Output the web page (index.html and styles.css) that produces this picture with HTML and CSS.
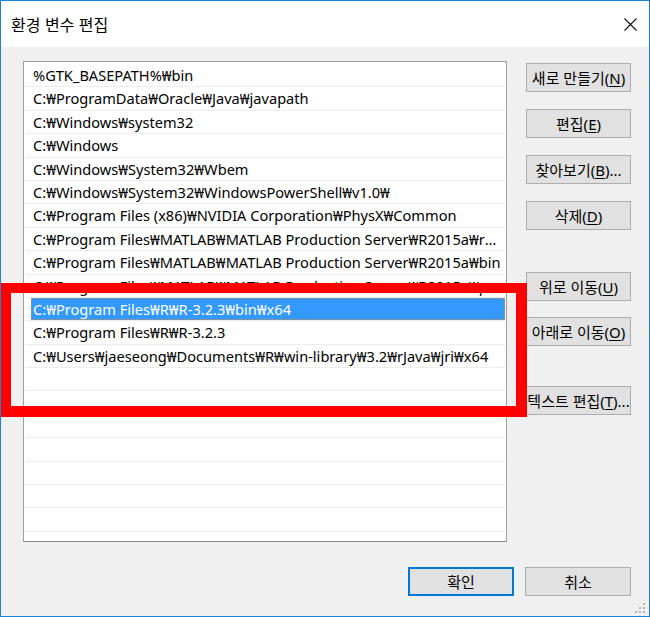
FILE: index.html
```html
<!DOCTYPE html>
<html lang="ko">
<head>
<meta charset="utf-8">
<title>환경 변수 편집</title>
<link rel="stylesheet" href="styles.css">
</head>
<body>
<div class="window">
  <div class="titlebar">
    <span class="title">환경 변수 편집</span>
    <svg class="close" width="13" height="13" viewBox="0 0 13 13" aria-hidden="true">
      <path d="M0.5 0.5 L12.5 12.5 M12.5 0.5 L0.5 12.5" stroke="#111" stroke-width="1.1" fill="none"/>
    </svg>
  </div>
  <div class="content">
    <div class="main">
      <div class="list">
        <div class="row"><span class="cell">%GTK_BASEPATH%₩bin</span></div>
        <div class="row"><span class="cell">C:₩ProgramData₩Oracle₩Java₩javapath</span></div>
        <div class="row"><span class="cell">C:₩Windows₩system32</span></div>
        <div class="row"><span class="cell">C:₩Windows</span></div>
        <div class="row"><span class="cell">C:₩Windows₩System32₩Wbem</span></div>
        <div class="row"><span class="cell">C:₩Windows₩System32₩WindowsPowerShell₩v1.0₩</span></div>
        <div class="row"><span class="cell">C:₩Program Files (x86)₩NVIDIA Corporation₩PhysX₩Common</span></div>
        <div class="row"><span class="cell">C:₩Program Files₩MATLAB₩MATLAB Production Server₩R2015a₩runtime₩win64</span></div>
        <div class="row"><span class="cell">C:₩Program Files₩MATLAB₩MATLAB Production Server₩R2015a₩bin</span></div>
        <div class="row"><span class="cell">C:₩Program Files₩MATLAB₩MATLAB Production Server₩R2015a₩polyspace₩bin</span></div>
        <div class="row selected"><span class="cell">C:₩Program Files₩R₩R-3.2.3₩bin₩x64</span></div>
        <div class="row"><span class="cell">C:₩Program Files₩R₩R-3.2.3</span></div>
        <div class="row"><span class="cell">C:₩Users₩jaeseong₩Documents₩R₩win-library₩3.2₩rJava₩jri₩x64</span></div>
        <div class="row"><span class="cell"></span></div>
        <div class="row"><span class="cell"></span></div>
        <div class="row"><span class="cell"></span></div>
        <div class="row"><span class="cell"></span></div>
        <div class="row"><span class="cell"></span></div>
        <div class="row"><span class="cell"></span></div>
        <div class="row"><span class="cell"></span></div>
        <div class="row"><span class="cell"></span></div>
      </div>
      <div class="actions">
        <button class="btn">새로 만들기(<u>N</u>)</button>
        <button class="btn">편집(<u>E</u>)</button>
        <button class="btn">찾아보기(<u>B</u>)...</button>
        <button class="btn">삭제(<u>D</u>)</button>
        <button class="btn gap-up">위로 이동(<u>U</u>)</button>
        <button class="btn gap-down">아래로 이동(<u>O</u>)</button>
        <button class="btn gap-text">텍스트 편집(<u>T</u>)...</button>
      </div>
    </div>
    <div class="footer">
      <button class="btn btn-wide btn-default">확인</button>
      <button class="btn btn-wide">취소</button>
    </div>
  </div>
  <svg class="grip" width="12" height="12" viewBox="0 0 12 12" aria-hidden="true">
    <rect x="9" y="1" width="2" height="2" fill="#b4b4b4"/>
    <rect x="5" y="5" width="2" height="2" fill="#b4b4b4"/>
    <rect x="9" y="5" width="2" height="2" fill="#b4b4b4"/>
    <rect x="1" y="9" width="2" height="2" fill="#b4b4b4"/>
    <rect x="5" y="9" width="2" height="2" fill="#b4b4b4"/>
    <rect x="9" y="9" width="2" height="2" fill="#b4b4b4"/>
  </svg>
  <div class="mark"></div>
</div>
</body>
</html>
```

FILE: styles.css
```css
* {
  box-sizing: border-box;
}

html,
body {
  margin: 0;
  padding: 0;
}

body {
  font-family: "Noto Sans", "Noto Sans CJK KR", sans-serif;
  font-size: 15px;
  color: #000;
  background: #f0f0f0;
}

.window {
  position: relative;
  width: 650px;
  height: 617px;
  border: 1px solid #1883d7;
  background: #f0f0f0;
  display: flex;
  flex-direction: column;
  overflow: hidden;
}

.titlebar {
  flex: none;
  height: 46px;
  background: #fff;
  display: flex;
  align-items: center;
  justify-content: space-between;
  padding: 0 12px 0 10px;
}

.title {
  font-family: "Noto Sans CJK KR", sans-serif;
  font-size: 16px;
  color: #000;
}

.close {
  display: block;
}

.content {
  flex: 1;
  display: flex;
  flex-direction: column;
  padding: 14px 18px 0 22px;
}

.main {
  display: flex;
  gap: 19px;
}

.list {
  width: 484px;
  height: 481px;
  background: #fff;
  border: 1px solid #a0a0a0;
  border-bottom-color: #8c8c8c;
  padding: 2px 1px 0 2px;
  overflow: hidden;
  font-size: 14.6px;
}

.row {
  height: 23.4px;
  border-bottom: 1px solid #ededed;
  display: flex;
}

.cell {
  flex: 1;
  min-width: 0;
  margin-left: 5px;
  padding: 0 4px 0 2px;
  line-height: 22.4px;
  white-space: nowrap;
  overflow: hidden;
  text-overflow: ellipsis;
}

.row.selected .cell {
  background: #3399ff;
  color: #fff;
  outline: 1px dotted #c98a4a;
  outline-offset: -1px;
}

.actions {
  display: flex;
  flex-direction: column;
  padding-top: 2px;
}

.btn {
  width: 105px;
  height: 29px;
  margin: 0;
  padding: 0;
  font: inherit;
  color: #000;
  background: #e1e1e1;
  border: 1px solid #adadad;
  display: flex;
  align-items: center;
  justify-content: center;
  white-space: nowrap;
  overflow: visible;
}

.actions .btn + .btn {
  margin-top: 17px;
}

.actions .btn.gap-up {
  margin-top: 42px;
}

.actions .btn.gap-down {
  margin-top: 16px;
}

.actions .btn.gap-text {
  margin-top: 40px;
}

.btn u {
  text-decoration: underline;
  text-underline-offset: 2px;
}

.footer {
  display: flex;
  justify-content: flex-end;
  gap: 11px;
  margin-top: 25px;
}

.btn-wide {
  width: 106px;
}

.btn-default {
  border: 2px solid #0078d7;
}

.grip {
  position: absolute;
  right: 3px;
  bottom: 2px;
}

.mark {
  position: absolute;
  left: -1px;
  top: 282px;
  width: 527px;
  height: 134px;
  border: 11px solid #ff0000;
  border-top-width: 10px;
  pointer-events: none;
}
```
